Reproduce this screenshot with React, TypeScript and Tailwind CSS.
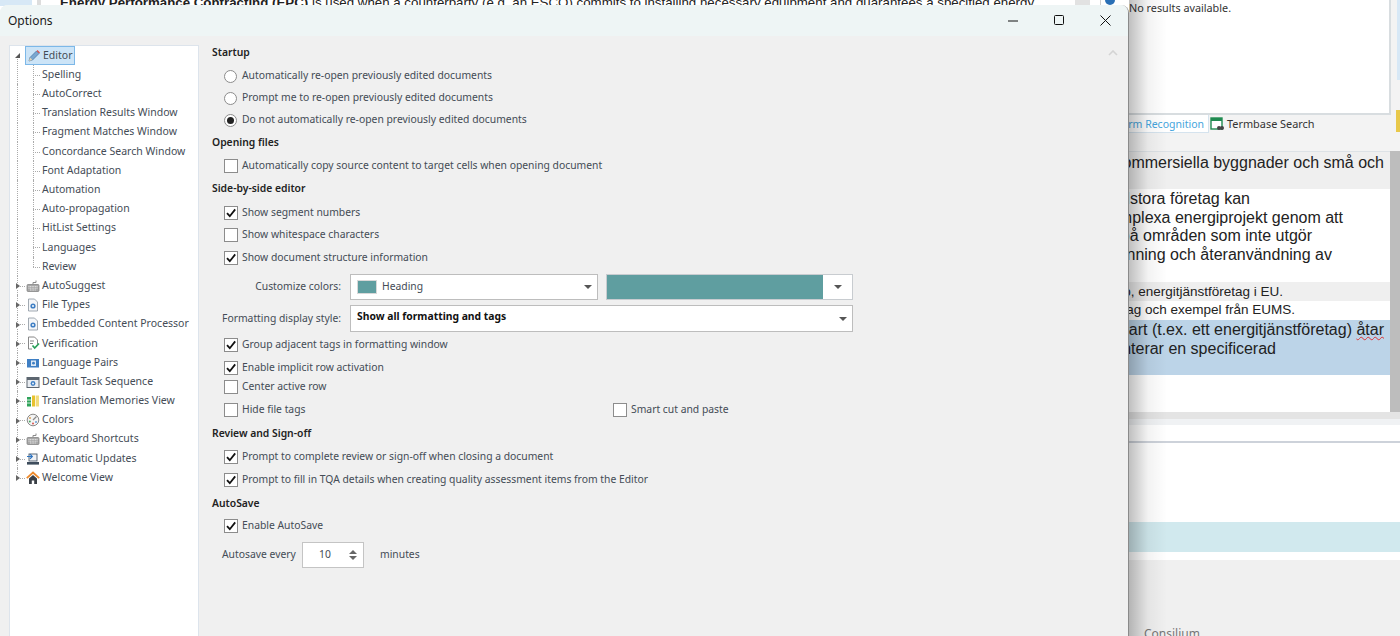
import type { ReactNode } from 'react'

const ui = "font-['Noto_Sans',sans-serif]"

function Pencil() {
    return (
        <svg width="14" height="14" viewBox="0 0 14 14">
            <path d="M2 12l1-3.5L9.5 2l2.5 2.5L5.5 11z" fill="#7ba7d0" stroke="#4a78a8" strokeWidth="0.8" />
            <path d="M9.5 2l1-1 2.5 2.5-1 1z" fill="#d9534f" />
            <path d="M2 12l1-3.5 2.5 2.5z" fill="#e8d4b0" />
        </svg>
    )
}

function KeyboardIcon() {
    return (
        <svg width="14" height="14" viewBox="0 0 14 14">
            <path d="M7 5V3.5h3V1.5" fill="none" stroke="#8a8a8a" />
            <rect x="1" y="5.5" width="12" height="7" rx="1" fill="#a8a8a8" stroke="#7a7a7a" strokeWidth="0.7" />
            <path d="M2.5 7.5h9M2.5 9.2h9M4 11h6" stroke="#e8e8e8" strokeWidth="0.9" strokeDasharray="1 0.6" />
        </svg>
    )
}

function DocGear() {
    return (
        <svg width="14" height="14" viewBox="0 0 14 14">
            <path d="M2.5 1h6l3 3v9h-9z" fill="#f4f6f8" stroke="#8c96a0" strokeWidth="0.8" />
            <circle cx="7" cy="8" r="2.6" fill="#3f7fc4" />
            <circle cx="7" cy="8" r="1" fill="#fff" />
        </svg>
    )
}

function Verify() {
    return (
        <svg width="14" height="14" viewBox="0 0 14 14">
            <path d="M2.5 1h6l3 3v4M6 13H2.5V1" fill="#fff" stroke="#7a7a7a" strokeWidth="0.9" />
            <path d="M4 5h4M4 7.5h3" stroke="#7a7a7a" strokeWidth="0.9" />
            <path d="M6.5 9.5l2.2 2.5L13 7.5" fill="none" stroke="#2aa05a" strokeWidth="1.7" />
        </svg>
    )
}

function LangPairs() {
    return (
        <svg width="14" height="14" viewBox="0 0 14 14">
            <rect x="1" y="3" width="12" height="8.5" fill="#3f7fc4" />
            <rect x="5" y="4.5" width="5" height="5.5" fill="#dfeaf5" />
            <circle cx="7.5" cy="7.2" r="1.4" fill="#3f7fc4" />
        </svg>
    )
}

function TaskSeq() {
    return (
        <svg width="14" height="14" viewBox="0 0 14 14">
            <rect x="1" y="2.5" width="12" height="10" fill="#e9edf2" stroke="#5d6670" />
            <rect x="1" y="2.5" width="12" height="2.5" fill="#5d6670" />
            <circle cx="7" cy="8.5" r="2.4" fill="#3f7fc4" />
            <circle cx="7" cy="8.5" r="0.9" fill="#fff" />
        </svg>
    )
}

function TmIcon() {
    return (
        <svg width="14" height="14" viewBox="0 0 14 14">
            <rect x="1" y="3" width="4" height="9.5" fill="#2fa35a" />
            <path d="M1 6h4M1 9h4" stroke="#fff" strokeWidth="0.8" />
            <rect x="6" y="1.5" width="3.2" height="11" fill="#e8c22e" />
            <rect x="10" y="1.5" width="3" height="11" fill="#f1dc7c" />
        </svg>
    )
}

function Palette() {
    return (
        <svg width="14" height="14" viewBox="0 0 14 14">
            <circle cx="7" cy="7" r="5.8" fill="#f4f4f4" stroke="#8a8a8a" />
            <path d="M7 7l3.5-3.5" stroke="#8a8a8a" strokeWidth="1.2" />
            <circle cx="4" cy="5" r="1" fill="#d9a05a" />
            <circle cx="3.8" cy="8.5" r="1" fill="#4aa564" />
            <circle cx="7" cy="10.5" r="1" fill="#d9534f" />
            <circle cx="10" cy="9" r="1" fill="#6b9fd4" />
        </svg>
    )
}

function Updates() {
    return (
        <svg width="14" height="14" viewBox="0 0 14 14">
            <rect x="3" y="2" width="8" height="7" fill="#f0f2f5" stroke="#4a5a6a" strokeWidth="0.9" />
            <rect x="1" y="10" width="12" height="2.6" fill="#3d4c5c" />
            <path d="M1 4.5h5M4 2.2l2.3 2.3L4 6.8" fill="none" stroke="#2a72c0" strokeWidth="1.2" />
        </svg>
    )
}

function Home() {
    return (
        <svg width="14" height="14" viewBox="0 0 14 14">
            <path d="M0.8 7.2L7 1.5l6.2 5.7" fill="none" stroke="#ee8a2c" strokeWidth="1.8" />
            <path d="M3 7.5L7 4l4 3.5V13H8.2V9.5H5.8V13H3z" fill="#3a3f46" />
        </svg>
    )
}

const editorChildren = [
    'Spelling',
    'AutoCorrect',
    'Translation Results Window',
    'Fragment Matches Window',
    'Concordance Search Window',
    'Font Adaptation',
    'Automation',
    'Auto-propagation',
    'HitList Settings',
    'Languages',
    'Review',
]

const treeNodes: { label: string; icon: ReactNode; last?: boolean }[] = [
    { label: 'AutoSuggest', icon: <KeyboardIcon /> },
    { label: 'File Types', icon: <DocGear /> },
    { label: 'Embedded Content Processor', icon: <DocGear /> },
    { label: 'Verification', icon: <Verify /> },
    { label: 'Language Pairs', icon: <LangPairs /> },
    { label: 'Default Task Sequence', icon: <TaskSeq /> },
    { label: 'Translation Memories View', icon: <TmIcon /> },
    { label: 'Colors', icon: <Palette /> },
    { label: 'Keyboard Shortcuts', icon: <KeyboardIcon /> },
    { label: 'Automatic Updates', icon: <Updates /> },
    { label: 'Welcome View', icon: <Home />, last: true },
]

function Tree() {
    return (
        <div className="w-[190px] shrink-0 bg-white border border-[#dde4ec] border-b-0 text-[10.5px] text-[#444c56]">
            {/* Editor */}
            <div className="relative h-[19.2px] flex items-center">
                <span className="absolute left-[5px] top-[7px] w-0 h-0 border-l-[5px] border-b-[5px] border-l-transparent border-b-[#555]" />
                <span className="absolute left-[7px] top-[13px] h-[7px] border-l border-dotted border-[#aaa]" />
                <div className="ml-[15px] h-[19px] w-[50px] flex items-center gap-[2px] pl-[1px] bg-[#cce4f7] border border-[#7db8e8]">
                    <Pencil />
                    <span>Editor</span>
                </div>
            </div>
            {editorChildren.map((label, i) => (
                <div key={label} className="relative h-[19.2px] flex items-center pl-[32px]">
                    <span className="absolute left-[7px] top-0 h-full border-l border-dotted border-[#aaa]" />
                    <span className={i === editorChildren.length - 1 ? 'absolute left-[23px] top-0 h-1/2 border-l border-dotted border-[#aaa]' : 'absolute left-[23px] top-0 h-full border-l border-dotted border-[#aaa]'} />
                    <span className="absolute left-[23px] top-1/2 w-[7px] border-t border-dotted border-[#aaa]" />
                    {label}
                </div>
            ))}
            {treeNodes.map(n => (
                <div key={n.label} className="relative h-[19.2px] flex items-center pl-[16px]">
                    <span className={n.last ? 'absolute left-[7px] top-0 h-1/2 border-l border-dotted border-[#aaa]' : 'absolute left-[7px] top-0 h-full border-l border-dotted border-[#aaa]'} />
                    <span className="absolute left-[7px] top-1/2 w-[8px] border-t border-dotted border-[#aaa]" />
                    <span className="absolute left-[6px] top-[7px] w-0 h-0 border-y-[3px] border-l-[4px] border-y-transparent border-l-[#666] bg-white" />
                    <span className="w-[14px] h-[14px] shrink-0 mr-[2px]">{n.icon}</span>
                    {n.label}
                </div>
            ))}
        </div>
    )
}

function CheckBox({ checked }: { checked?: boolean }) {
    return (
        <span className="w-[14px] h-[14px] shrink-0 bg-white border border-[#8c8c8c] flex items-center justify-center">
            {checked && (
                <svg width="12" height="12" viewBox="0 0 12 12">
                    <path d="M2 6.2l2.8 3L10.2 2.4" fill="none" stroke="#111" strokeWidth="1.8" />
                </svg>
            )}
        </span>
    )
}

function Check({ label, checked, className }: { label: string; checked?: boolean; className: string }) {
    return (
        <div className={`h-4 flex items-center gap-1 pl-3 ${className}`}>
            <CheckBox checked={checked} />
            <span>{label}</span>
        </div>
    )
}

function Radio({ label, checked, className }: { label: string; checked?: boolean; className: string }) {
    return (
        <div className={`h-4 flex items-center gap-[5px] pl-3 ${className}`}>
            <span className="w-[13px] h-[13px] shrink-0 rounded-full bg-white border border-[#8c8c8c] flex items-center justify-center">
                {checked && <span className="w-[7px] h-[7px] rounded-full bg-[#222]" />}
            </span>
            <span>{label}</span>
        </div>
    )
}

function Heading({ children, className }: { children: ReactNode; className: string }) {
    return <div className={`h-4 flex items-center font-semibold text-[#222] ${className}`}>{children}</div>
}

function Caret({ className }: { className?: string }) {
    return <span className={`w-0 h-0 border-x-[4px] border-t-[4px] border-x-transparent border-t-[#555] ${className ?? ''}`} />
}

function OptionsPane() {
    return (
        <div className="relative flex-1 pl-[13px] text-[10.35px] text-[#444c56]">
            <svg className="absolute right-[10px] top-[5px]" width="10" height="6" viewBox="0 0 10 6">
                <path d="M1 5l4-4 4 4" fill="none" stroke="#d4d4d4" strokeWidth="1.6" />
            </svg>
            <Heading className="">Startup</Heading>
            <Radio className="mt-[7px]" label="Automatically re-open previously edited documents" />
            <Radio className="mt-[6px]" label="Prompt me to re-open previously edited documents" />
            <Radio className="mt-[6px]" label="Do not automatically re-open previously edited documents" checked />
            <Heading className="mt-[7px]">Opening files</Heading>
            <Check className="mt-[7px]" label="Automatically copy source content to target cells when opening document" />
            <Heading className="mt-[7px]">Side-by-side editor</Heading>
            <Check className="mt-[8px]" label="Show segment numbers" checked />
            <Check className="mt-[6px]" label="Show whitespace characters" />
            <Check className="mt-[7px]" label="Show document structure information" checked />

            <div className="mt-[8px] h-[26px] flex items-center">
                <span className="w-[129px] text-right">Customize colors:</span>
                <div className="ml-[9px] w-[248px] h-[26px] bg-white border border-[#bdbdbd] flex items-center pl-[6px] pr-[5px]">
                    <span className="w-[20px] h-[14px] bg-[#5f9ea0] border border-[#d8d8d8]" />
                    <span className="ml-[5px] flex-1">Heading</span>
                    <Caret />
                </div>
                <div className="ml-[8px] w-[247px] h-[26px] bg-white border border-[#c8ccd0] flex items-center">
                    <span className="w-[216px] h-full bg-[#5f9ea0]" />
                    <span className="flex-1 flex justify-center"><Caret /></span>
                </div>
            </div>
            <div className="mt-[5px] h-[27px] flex items-center">
                <span className="w-[129px] text-right">Formatting display style:</span>
                <div className="ml-[9px] w-[503px] h-[27px] bg-white border border-[#bdbdbd] flex items-center justify-between pl-[6px] pr-[5px]">
                    <span className="font-bold text-[#111] -mt-[4px]">Show all formatting and tags</span>
                    <Caret />
                </div>
            </div>

            <Check className="mt-[5px]" label="Group adjacent tags in formatting window" checked />
            <Check className="mt-[7px]" label="Enable implicit row activation" checked />
            <Check className="mt-[3px]" label="Center active row" />
            <div className="mt-[7px] h-4 flex items-center pl-3">
                <div className="w-[389px] flex items-center gap-1">
                    <CheckBox />
                    <span>Hide file tags</span>
                </div>
                <div className="flex items-center gap-1">
                    <CheckBox />
                    <span>Smart cut and paste</span>
                </div>
            </div>
            <Heading className="mt-[8px]">Review and Sign-off</Heading>
            <Check className="mt-[7px]" label="Prompt to complete review or sign-off when closing a document" checked />
            <Check className="mt-[7px]" label="Prompt to fill in TQA details when creating quality assessment items from the Editor" checked />
            <Heading className="mt-[8px]">AutoSave</Heading>
            <Check className="mt-[6px]" label="Enable AutoSave" checked />
            <div className="mt-[8px] h-[26px] flex items-center pl-[10px]">
                <span className="w-[80px]">Autosave every</span>
                <div className="w-[62px] h-[26px] bg-white border border-[#c4c4c4] flex items-center pl-[16px] pr-[6px] justify-between">
                    <span>10</span>
                    <span className="flex flex-col gap-[2px]">
                        <span className="w-0 h-0 border-x-[4px] border-b-[4px] border-x-transparent border-b-[#666]" />
                        <span className="w-0 h-0 border-x-[4px] border-t-[4px] border-x-transparent border-t-[#666]" />
                    </span>
                </div>
                <span className="ml-4">minutes</span>
            </div>
        </div>
    )
}

function OptionsWindow() {
    return (
        <div className={`absolute left-0 top-[5px] w-[1129px] h-[631px] rounded-t-lg overflow-hidden bg-[#f0f0f0] border-r border-[#8a8a8a] flex flex-col ${ui}`}>
            <div className="h-[31px] shrink-0 bg-[#eef5f5] flex items-center pl-[8px] pr-[17px] text-[#1a1a1a] text-xs">
                <span className="flex-1">Options</span>
                <div className="flex items-center gap-[35px]">
                    <svg width="11" height="11" viewBox="0 0 11 11"><path d="M0 6h10" stroke="#111" /></svg>
                    <svg width="11" height="11" viewBox="0 0 11 11"><rect x="0.5" y="0.5" width="9" height="9" rx="1" fill="none" stroke="#111" /></svg>
                    <svg width="11" height="11" viewBox="0 0 11 11"><path d="M0.5 0.5l10 10M10.5 0.5l-10 10" stroke="#111" /></svg>
                </div>
            </div>
            <div className="flex-1 flex pl-[9px] pt-[9px]">
                <Tree />
                <OptionsPane />
            </div>
        </div>
    )
}

// Line of the translation grid: right-aligned so the part under the dialog is what gets cut
function DocLine({ children, className }: { children: ReactNode; className: string }) {
    return <div className={`flex justify-end ${className}`}>{children}</div>
}

function Backdrop() {
    return (
        <div className="h-[636px] flex font-['Liberation_Sans',sans-serif] bg-[#f3f3f3]">
            {/* Strip of the document left above the dialog */}
            <div className="w-[1128px] shrink-0 bg-white">
                <div className="h-[6px] overflow-hidden flex">
                    <div className="w-[32px] shrink-0 bg-[#d7e8f6]" />
                    <div className="w-[5px] shrink-0" />
                    <div className="w-[4px] shrink-0 bg-[#dddddd]" />
                    <div className="w-[19px] shrink-0" />
                    <div className="w-[1015px] shrink-0 whitespace-nowrap text-[13.3px] leading-[6px] text-[#222]">
                        <b>Energy Performance Contracting (EPC)</b> is used when a counterparty (e.g. an ESCO) commits to installing necessary equipment and guarantees a specified energy
                    </div>
                    <div className="w-[15px] shrink-0 bg-[#e2e2e2]" />
                    <div className="w-[10px] shrink-0" />
                    <div className="w-[1px] shrink-0 bg-[#cfcfcf]" />
                    <div className="w-[4px] shrink-0" />
                    <div className="w-[10px] h-[10px] shrink-0 -mt-[5px] rounded-full bg-[#2a6fb5]" />
                </div>
            </div>
            <div className="w-[272px] shrink-0 flex flex-col overflow-hidden">
                <div className="h-[115px] shrink-0 flex">
                    <div className="w-[263px] bg-white border-r-2 border-b-2 border-[#d8dde0] pl-[1px] text-[10.8px] text-[#333]">
                        <span className={ui}>No results available.</span>
                    </div>
                    <div className="flex-1 flex flex-col">
                        <div className="h-[80px] ml-[6px] bg-[#d7e8f6]" />
                    </div>
                </div>
                <div className={`h-[36px] shrink-0 flex items-start text-[10.5px] ${ui}`}>
                    <div className="w-[81px] h-[18px] flex justify-end whitespace-nowrap bg-white border-r border-b border-[#d5e3ee] pr-[4px] text-[#45a5dd] leading-[18px]">Term Recognition</div>
                    <svg className="ml-[1px] mt-[2px]" width="14" height="14" viewBox="0 0 14 14">
                        <rect x="1" y="1" width="11" height="11" fill="#fff" stroke="#1f8a50" strokeWidth="1.4" />
                        <rect x="1" y="1" width="11" height="3" fill="#1f8a50" />
                        <circle cx="9" cy="11" r="2" fill="#444" />
                        <circle cx="12" cy="11" r="2" fill="#444" />
                    </svg>
                    <span className="ml-[3px] text-[10.9px] leading-[18px] text-[#333]">Termbase Search</span>
                    <div className="ml-auto w-[4px] h-[22px] -mt-[5px] bg-[#e8c84a]" />
                </div>
                <div className="h-[261px] shrink-0 flex text-[16px] leading-[18.7px] text-[#222] whitespace-nowrap">
                    <div className="w-[262px] flex flex-col border-t border-[#dde2e6]">
                        <div className="h-[37px] bg-[#efefef] pt-[2px]">
                            <DocLine className="pr-[6px]">kommersiella byggnader och små och</DocLine>
                        </div>
                        <div className="h-[93px] bg-white pt-[1px]">
                            <DocLine className="pr-[140px]">medelstora företag kan</DocLine>
                            <DocLine className="pr-[47px]">komplexa energiprojekt genom att</DocLine>
                            <DocLine className="pr-[78px]">på områden som inte utgör</DocLine>
                            <DocLine className="pr-[58px]">vinning och återanvändning av</DocLine>
                        </div>
                        <div className="h-[19px] bg-[#efefef] pt-[1px] text-[13.5px]">
                            <DocLine className="pr-[107px]">o, energitjänstföretag i EU.</DocLine>
                        </div>
                        <div className="h-[19px] bg-white text-[13.5px]">
                            <DocLine className="pr-[95px]">tag och exempel från EUMS.</DocLine>
                        </div>
                        <div className="h-[55px] bg-[#bcd4e8] pt-[1px]">
                            <DocLine className="pr-[6px]"><span>Avtalspart (t.ex. ett energitjänstföretag) <span className="underline decoration-wavy decoration-[#d33] decoration-1">åtar</span></span></DocLine>
                            <DocLine className="pr-[114px]">garanterar en specificerad</DocLine>
                        </div>
                        <div className="h-[37px] bg-white" />
                    </div>
                    <div className="flex-1 bg-[#bdbdbd]" />
                </div>
                <div className="h-[7px] shrink-0 bg-[#e4e4e4]" />
                <div className="h-[6px] shrink-0 bg-[#f0f2f4]" />
                <div className="h-[18px] shrink-0 bg-white border-b-2 border-[#cdd2da]" />
                <div className="h-[79px] shrink-0 bg-white" />
                <div className="h-[30px] shrink-0 bg-[#d1e9ee]" />
                <div className="h-[8px] shrink-0 bg-white" />
                <div className="h-[76px] shrink-0 overflow-hidden bg-[#f0f0f0] pl-[16px] pt-[66px] text-[12px] leading-[16px] text-[#777]">
                    <span className={ui}>Consilium</span>
                </div>
            </div>
        </div>
    )
}

export default function App() {
    return (
        <div className="relative h-[636px] w-[1400px] overflow-hidden">
            <Backdrop />
            <div className="absolute left-[1129px] top-0 w-[38px] h-full bg-gradient-to-r from-black/25 via-black/5 to-transparent" />
            <OptionsWindow />
        </div>
    )
}
